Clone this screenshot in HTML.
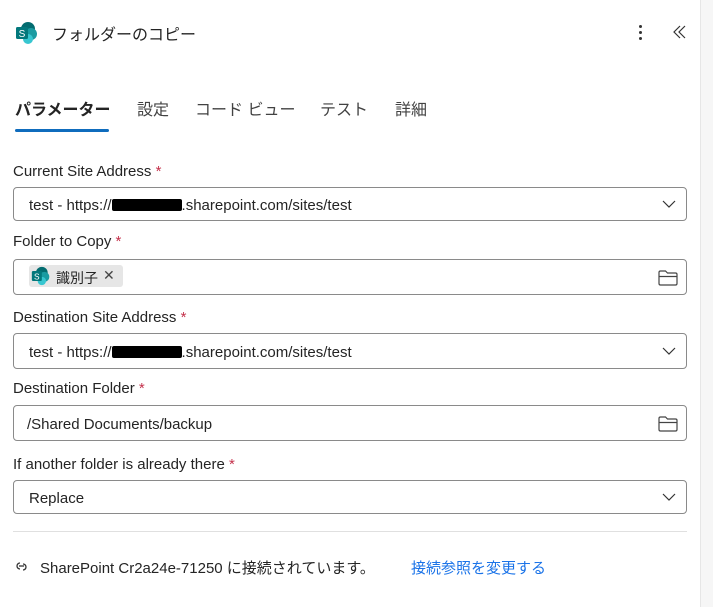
<!DOCTYPE html>
<html><head><meta charset="utf-8"><style>
body{margin:0;width:713px;height:607px;background:#fff;font-family:"Liberation Sans","Noto Sans CJK JP",sans-serif;color:#242424;position:relative;overflow:hidden}
.a{position:absolute}
.lbl{position:absolute;left:13px;font-size:15px;color:#242424}
.lbl span{color:#c4314b}
.f{position:absolute;left:13px;width:674px;border:1px solid #8a8a8a;border-radius:4px;font-size:15px;box-sizing:border-box}
.f .t{position:absolute;left:15px;top:9px}
.chev{position:absolute;right:10px;top:9px}
.fold{position:absolute;right:7px;top:8px}
.tab{position:absolute;top:96px;font-size:16px;color:#424242}
.blk{display:inline-block;background:#000;width:70px;height:12px;vertical-align:-1px;border-radius:2px}
</style></head><body>
<div class="a" style="right:0;top:0;width:12px;height:607px;background:#f6f6f6;border-left:1px solid #e6e6e6"></div>
<svg class="a" style="left:15px;top:21px" width="24" height="24" viewBox="0 0 24 24"><circle cx="13" cy="8" r="7" fill="#036c70"/><circle cx="16" cy="13" r="6" fill="#1a9ba1"/><circle cx="13" cy="18" r="5" fill="#37c6d0"/><rect x="1" y="6" width="12" height="12" rx="1.5" fill="#03787c"/><text x="7" y="16" font-size="10" fill="#fff" text-anchor="middle" font-family="Liberation Sans">S</text></svg>
<div class="a" style="left:52px;top:21px;font-size:16px">フォルダーのコピー</div>
<div class="a" style="left:639px;top:25px"><div style="width:3px;height:3px;background:#333;border-radius:2px;margin-bottom:3px"></div><div style="width:3px;height:3px;background:#333;border-radius:2px;margin-bottom:3px"></div><div style="width:3px;height:3px;background:#333;border-radius:2px"></div></div>
<svg class="a" style="left:673px;top:25px" width="14" height="14" viewBox="0 0 14 14"><path d="M7 1L1 7l6 6M12 1L6 7l6 6" fill="none" stroke="#333" stroke-width="1.2"/></svg>
<div class="tab" style="left:15px;font-weight:bold;color:#242424">パラメーター</div>
<div class="a" style="left:15px;top:129px;width:94px;height:3px;background:#0f6cbd;border-radius:2px"></div>
<div class="tab" style="left:137px">設定</div>
<div class="tab" style="left:195px">コード ビュー</div>
<div class="tab" style="left:320px">テスト</div>
<div class="tab" style="left:395px">詳細</div>

<div class="lbl" style="top:163px">Current Site Address <span>*</span></div>
<div class="f" style="top:187px;height:34px"><div class="t">test - https://<span class="blk"></span>.sharepoint.com/sites/test</div>
<svg class="chev" width="14" height="14" viewBox="0 0 14 14"><path d="M1 4l6 6 6-6" fill="none" stroke="#333" stroke-width="1.2"/></svg></div>

<div class="lbl" style="top:233px">Folder to Copy <span>*</span></div>
<div class="f" style="top:259px;height:36px">
<div class="a" style="left:15px;top:5px;width:94px;height:22px;background:#e6e6e6;border-radius:3px"></div>
<svg class="a" style="left:17px;top:6px" width="20" height="20" viewBox="0 0 24 24"><circle cx="13" cy="8" r="7" fill="#036c70"/><circle cx="16" cy="13" r="6" fill="#1a9ba1"/><circle cx="13" cy="18" r="5" fill="#37c6d0"/><rect x="1" y="6" width="12" height="12" rx="1.5" fill="#03787c"/><text x="7" y="16" font-size="10" fill="#fff" text-anchor="middle">S</text></svg>
<div class="a" style="left:42px;top:8px;font-size:14px">識別子</div>
<div class="a" style="left:89px;top:7px;font-size:14px;color:#444">✕</div>
<svg class="fold" width="22" height="20" viewBox="0 0 22 20"><path d="M2 4.5q0-1.5 1.5-1.5h5l2 2h8q1.5 0 1.5 1.5v9q0 1.5-1.5 1.5h-15q-1.5 0-1.5-1.5z M2 8.5h18" fill="none" stroke="#444" stroke-width="1.2"/></svg></div>

<div class="lbl" style="top:309px">Destination Site Address <span>*</span></div>
<div class="f" style="top:333px;height:36px"><div class="t" style="top:10px">test - https://<span class="blk"></span>.sharepoint.com/sites/test</div>
<svg class="chev" style="top:10px" width="14" height="14" viewBox="0 0 14 14"><path d="M1 4l6 6 6-6" fill="none" stroke="#333" stroke-width="1.2"/></svg></div>

<div class="lbl" style="top:380px">Destination Folder <span>*</span></div>
<div class="f" style="top:405px;height:36px"><div class="t" style="left:13px;top:10px">/Shared Documents/backup</div>
<svg class="fold" width="22" height="20" viewBox="0 0 22 20"><path d="M2 4.5q0-1.5 1.5-1.5h5l2 2h8q1.5 0 1.5 1.5v9q0 1.5-1.5 1.5h-15q-1.5 0-1.5-1.5z M2 8.5h18" fill="none" stroke="#444" stroke-width="1.2"/></svg></div>

<div class="lbl" style="top:456px">If another folder is already there <span>*</span></div>
<div class="f" style="top:480px;height:34px"><div class="t">Replace</div>
<svg class="chev" width="14" height="14" viewBox="0 0 14 14"><path d="M1 4l6 6 6-6" fill="none" stroke="#333" stroke-width="1.2"/></svg></div>

<div class="a" style="left:13px;top:531px;width:674px;height:1px;background:#e0e0e0"></div>
<svg class="a" style="left:14px;top:559px" width="15" height="15" viewBox="0 0 15 15"><path d="M6 4a3 3 0 1 0 0 6M9 11a3 3 0 1 0 0-6" fill="none" stroke="#333" stroke-width="1.3"/><path d="M5 7h5" stroke="#333" stroke-width="1.3"/></svg>
<div class="a" style="left:40px;top:557px;font-size:15px">SharePoint Cr2a24e-71250 に接続されています。</div>
<div class="a" style="left:411px;top:557px;font-size:15px;color:#1a73e8">接続参照を変更する</div>
</body></html>
